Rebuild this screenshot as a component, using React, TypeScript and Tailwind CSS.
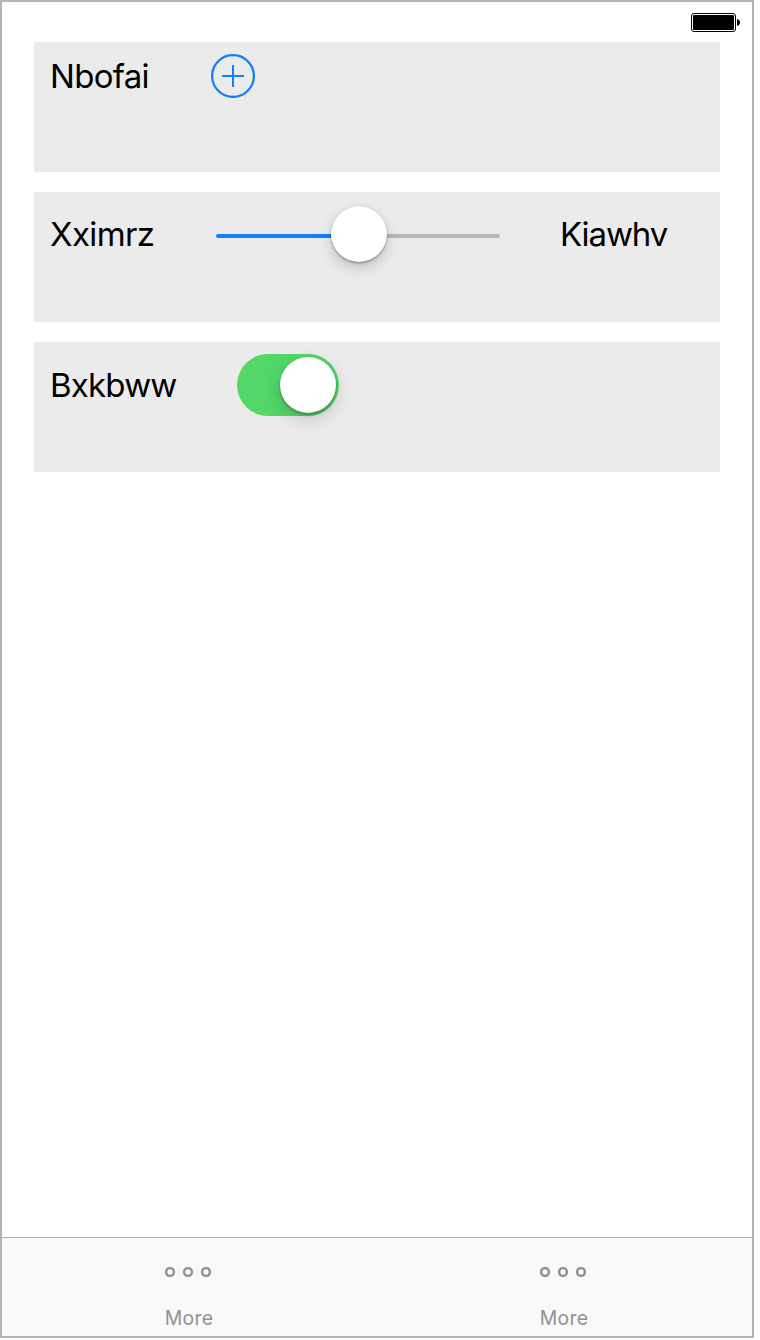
import type { ReactNode } from "react";

function Battery() {
  return (
    <svg className="block" width="49" height="19" viewBox="0 0 49 19">
      <rect x="0.5" y="0.5" width="44" height="18" rx="2.5" fill="#fff" stroke="#000" />
      <rect x="2" y="2" width="41" height="15" rx="1" fill="#000" />
      <path d="M46 6c2 .3 3 1.600 3 3.500S48 12.700 46 13z" fill="#000" />
    </svg>
  );
}

function Card({ children }: { children: ReactNode }) {
  return <section className="flex h-[130px] items-start bg-[#ebebeb] pl-4">{children}</section>;
}

function AddButton() {
  return (
    <button type="button" aria-label="Add" className="mt-3">
      <svg className="block" width="44" height="44" viewBox="0 0 44 44" fill="none" stroke="#147efb" strokeWidth="2">
        <circle cx="22" cy="22" r="20.900" strokeWidth="2.300" />
        <path d="M11 22h22M22 11v22" />
      </svg>
    </button>
  );
}

function Slider() {
  return (
    <div className="mt-[14px] flex h-14 w-[284px] items-center">
      <div className="mt-1 h-1 w-[115px] rounded-l-full bg-[#147efb]" />
      <div className="z-10 size-14 rounded-full bg-white shadow-[0_0_1px_rgba(0,0,0,0.35),0_2px_2px_rgba(0,0,0,0.22),0_6px_14px_rgba(0,0,0,0.18)]" />
      <div className="mt-1 h-1 w-[113px] rounded-r-full bg-[#b7b7b7]" />
    </div>
  );
}

function Toggle() {
  return (
    <div className="mt-3 flex h-[62px] w-[102px] items-center justify-end rounded-full bg-[#53d769] pr-[3px]">
      <div className="size-14 rounded-full bg-white shadow-[0_2px_3px_rgba(0,0,0,0.25),0_6px_18px_rgba(0,0,0,0.18)]" />
    </div>
  );
}

function Tab() {
  return (
    <div className="flex flex-1 flex-col items-center pt-[29px] font-['Inter',sans-serif] text-[#929292]">
      <svg className="mr-[3px] block" width="46" height="10" viewBox="0 0 46 10" fill="none" stroke="currentColor" strokeWidth="2.500">
        <circle cx="5" cy="5" r="3.900" />
        <circle cx="23" cy="5" r="3.900" />
        <circle cx="41" cy="5" r="3.900" />
      </svg>
      <span className="mt-[29px] mr-px text-[19.4px] leading-6 tracking-[0.3px]">More</span>
    </div>
  );
}

export default function App() {
  return (
    <div className="h-[1340px] w-[760px] overflow-hidden bg-white">
      <div className="flex h-[1338px] w-[754px] flex-col border-2 border-[#b4b4b4] bg-white font-['Inter',sans-serif] text-[33px] leading-10 text-black">
        <header className="flex h-10 shrink-0 justify-end pt-[11px] pr-3">
          <Battery />
        </header>
        <main className="flex flex-1 flex-col gap-5 px-8">
          <Card>
            <span className="mt-[14px] w-[161px] tracking-[-0.7px]">Nbofai</span>
            <AddButton />
          </Card>
          <Card>
            <span className="mt-[22px] w-[166px] tracking-[-0.6px]">Xximrz</span>
            <Slider />
            <span className="mt-[22px] ml-[60px] tracking-[-1.1px]">Kiawhv</span>
          </Card>
          <Card>
            <span className="mt-[23px] w-[187px] tracking-[-0.8px]">Bxkbww</span>
            <Toggle />
          </Card>
        </main>
        <nav className="flex h-[99px] shrink-0 border-t border-[#b2b2b2] bg-[#f9f9f9]">
          <Tab />
          <Tab />
        </nav>
      </div>
    </div>
  );
}
